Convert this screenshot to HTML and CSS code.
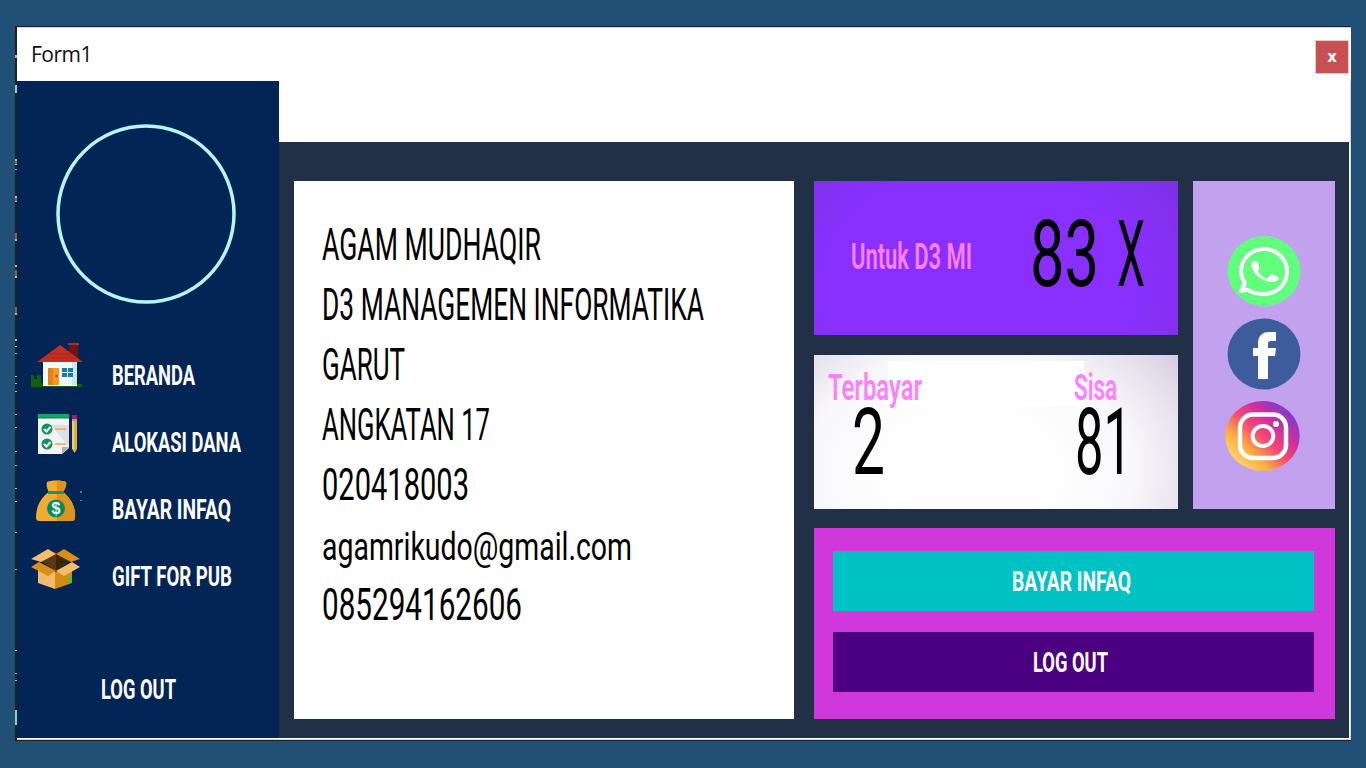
FILE: index.html
```html
<!DOCTYPE html>
<html lang="id">
<head>
<meta charset="utf-8">
<title>Form1</title>
<link rel="stylesheet" href="styles.css">
</head>
<body>
<div class="window">
  <svg class="edge" width="2" height="712" viewBox="0 0 2 712">
    <path d="M1 28v3M1 132v2M1 137v1M1 142v1M1 169v2M1 174v1M1 212v2M1 238v2M1 249v2M1 286v2M1 312v2M1 319v1M1 326v1M1 349v1M1 356v1M1 364v1M1 387v1M1 400v1M1 424v1M1 438v1M1 461v1M1 474v1M1 505v1M1 542v1M1 623v1M1 646v1M1 653v1" stroke="#b9b5ab" stroke-width="2"/>
    <path d="M1 58v8M1 683v15" stroke="#8fd3b6" stroke-width="2"/>
    <path d="M1 134v3M1 171v3M1 206v6M1 243v6M1 280v6" stroke="#9a5b30" stroke-width="2"/>
  </svg>
  <header class="titlebar">
    <span class="title">Form1</span>
    <button class="close">x</button>
  </header>
  <div class="main">
    <aside class="sidebar">
      <svg class="avatar" width="180" height="180"><circle cx="90" cy="90" r="88" fill="none" stroke="#b5f6fa" stroke-width="3.500"/></svg>
      <nav class="menu">
        <a class="item">
          <svg class="icon house" width="54" height="50" viewBox="0 0 54 50">
            <path d="M0 36h3v4h3v-4h4v8h4v3H0z" fill="#125f12"/>
            <path d="M0 45h51v3H0z" fill="#125f12"/>
            <path d="M12 22 30 7l16 14v26H12z" fill="#f1fafc"/>
            <path d="M41 22h5v24h-5z" fill="#c9e9f0"/>
            <path d="M38 5h9v17l-9-8z" fill="#701316"/>
            <path d="M37 4h11v2H37z" fill="#b52a21"/>
            <path d="M29 6 6 23h46z" fill="#c42d22"/>
            <path d="M18 15h22M12 19h34" stroke="#a92820"/>
            <path d="M17 29h11v17H17z" fill="#f59a20"/>
            <path d="M17 29h5v17h-5z" fill="#e57f18"/>
            <circle cx="25.500" cy="37" r="1.200" fill="#b83718"/>
            <path d="M31 29h11v9H31z" fill="#167eae"/>
            <path d="M36.500 29v9M31 33.500h11" stroke="#d9f4fc" stroke-width="1"/>
          </svg>
          <svg class="label" width="149" height="40"><text x="0" y="28.500" textLength="83" lengthAdjust="spacingAndGlyphs">BERANDA</text></svg>
        </a>
        <a class="item">
          <svg class="icon" width="54" height="50" viewBox="0 0 54 50">
            <path d="M7 7h31v34l-7 6H7z" fill="#f2f3f5"/>
            <path d="M20 18h18v22z" fill="#dedfe4"/>
            <path d="M7 7h31v4H7z" fill="#16a36b"/>
            <path d="M7 10.500h31v1H7z" fill="#0c7e52"/>
            <path d="M31 47v-7h7z" fill="#aeb1b7"/>
            <circle cx="16" cy="22" r="5.500" fill="#14925e"/>
            <circle cx="16" cy="37" r="5.500" fill="#14925e"/>
            <path d="m13 22 2.500 2.500 4-4.500M13 37l2.500 2.500 4-4.500" fill="none" stroke="#fff" stroke-width="2"/>
            <path d="M24 22h11M24 37h11" stroke="#eeb47c" stroke-width="2"/>
            <path d="M41 12h5v30l-2.500 4-2.500-4z" fill="#e5ad48"/>
            <path d="M41 12h2v30h-2z" fill="#f4cc70"/>
            <path d="M41 8h5v4h-5z" fill="#c20d68"/>
            <path d="M41 12h5v2h-5z" fill="#a89aa5"/>
          </svg>
          <svg class="label" width="149" height="40"><text x="0" y="28.500" textLength="129" lengthAdjust="spacingAndGlyphs">ALOKASI DANA</text></svg>
        </a>
        <a class="item">
          <svg class="icon bag" width="54" height="50" viewBox="0 0 54 50">
            <path d="M16 5c4-2 14-2 19 0 1 3-1 8-3 10 7 5 13 15 12 25 0 3-1 4-4 4H9c-3 0-4-1-4-4 0-10 5-20 13-25-2-3-3-7-2-10z" fill="#f1ad31"/>
            <path d="M26 3.500c4 0 7 .500 9 1.500 1 3-1 8-3 10 7 5 13 15 12 25 0 3-1 4-4 4H26z" fill="#dc941f"/>
            <path d="M17 14h16v3H17z" fill="#0d9a68"/>
            <circle cx="25" cy="31.500" r="9" fill="#088a61"/>
            <text class="coin" x="25" y="37" text-anchor="middle">$</text>
            <path d="M50 14v2M50 23v1" stroke="#7e775f" stroke-width="2"/>
          </svg>
          <svg class="label" width="149" height="40"><text x="0" y="28.500" textLength="119" lengthAdjust="spacingAndGlyphs">BAYAR INFAQ</text></svg>
        </a>
        <a class="item">
          <svg class="icon box" width="54" height="50" viewBox="0 0 54 50">
            <path d="M7 23v15l17 6V27z" fill="#f0bb6c"/>
            <path d="M41 23v15l-17 6V27z" fill="#d38b13"/>
            <path d="M8 14 25 6l16 8-16 13z" fill="#5b3713"/>
            <path d="M25 6v21l16-13z" fill="#3d250c"/>
            <path d="M17 4 25 9 10 17 0 14z" fill="#f3bd70"/>
            <path d="M33 4 25 9l15 8 9-3z" fill="#d88e17"/>
            <path d="M8 17 0 22l17 9 8-5z" fill="#d88e17"/>
            <path d="M41 17 49 22l-16 9-8-5z" fill="#f3bd70"/>
            <path d="m37 32 4-2v7l-4 2z" fill="#62b83d"/>
          </svg>
          <svg class="label" width="149" height="40"><text x="0" y="28.500" textLength="120" lengthAdjust="spacingAndGlyphs">GIFT FOR PUB</text></svg>
        </a>
      </nav>
      <a class="logout"><svg class="label" width="150" height="40"><text x="0" y="28.500" textLength="75" lengthAdjust="spacingAndGlyphs">LOG OUT</text></svg></a>
    </aside>
    <div class="content">
      <div class="banner"></div>
      <div class="board">
        <section class="profile">
          <svg class="line" width="460" height="60"><text x="0" y="44.500" textLength="219" lengthAdjust="spacingAndGlyphs">AGAM MUDHAQIR</text></svg>
          <svg class="line" width="460" height="60"><text x="0" y="44.500" textLength="382" lengthAdjust="spacingAndGlyphs">D3 MANAGEMEN INFORMATIKA</text></svg>
          <svg class="line" width="460" height="60"><text x="0" y="44.500" textLength="83" lengthAdjust="spacingAndGlyphs">GARUT</text></svg>
          <svg class="line" width="460" height="60"><text x="0" y="44.500" textLength="168" lengthAdjust="spacingAndGlyphs">ANGKATAN 17</text></svg>
          <svg class="line" width="460" height="60"><text x="0" y="44.500" textLength="147" lengthAdjust="spacingAndGlyphs">020418003</text></svg>
          <svg class="line email" width="460" height="60"><text x="0" y="44.500" textLength="310" lengthAdjust="spacingAndGlyphs">agamrikudo@gmail.com</text></svg>
          <svg class="line" width="460" height="60"><text x="0" y="44.500" textLength="200" lengthAdjust="spacingAndGlyphs">085294162606</text></svg>
        </section>
        <div class="side">
          <div class="upper">
            <div class="stats">
              <section class="quota">
                <svg width="364" height="153">
                  <text class="caption" x="37" y="87.500" textLength="121" lengthAdjust="spacingAndGlyphs">Untuk D3 MI</text>
                  <text class="number" x="216" y="105" textLength="69" lengthAdjust="spacingAndGlyphs">83</text>
                  <text class="number" x="303" y="105" textLength="28" lengthAdjust="spacingAndGlyphs">X</text>
                </svg>
              </section>
              <section class="progress">
                <svg width="364" height="154">
                  <rect x="74" y="6" width="196" height="45" fill="#fff"/>
                  <text class="caption" x="14" y="44.500" textLength="94" lengthAdjust="spacingAndGlyphs">Terbayar</text>
                  <text class="caption" x="260" y="44.500" textLength="43" lengthAdjust="spacingAndGlyphs">Sisa</text>
                  <text class="number" x="38" y="118.500" textLength="33" lengthAdjust="spacingAndGlyphs">2</text>
                  <text class="number" x="261" y="118.500" textLength="57" lengthAdjust="spacingAndGlyphs">81</text>
                </svg>
              </section>
            </div>
            <section class="social">
              <svg width="74" height="70" viewBox="0 0 74 70">
                <ellipse cx="37" cy="35" rx="36.500" ry="35" fill="#62ff7e"/>
                <path d="m14 57 6-1.500c5 3.200 11 4.500 17 4.500 13 0 23-10 23-22.500S50 15 37 15 14 25 14 37.500c0 4 1.500 8 4 11.500z" transform="translate(0 -2)" fill="none" stroke="#fff" stroke-width="4" stroke-linejoin="round"/>
                <path d="M28 25c3 0 5 5 4 8l-1 2c2 4 5 6 9 8l4-5c3 0 7 3 8 4-1 3-4 4-8 4-10-1-19-9-20-18 0-1 2-3 4-3z" fill="#fff"/>
              </svg>
              <svg width="74" height="72" viewBox="0 0 74 72">
                <ellipse cx="37" cy="36" rx="36.500" ry="35.500" fill="#3d5c9b"/>
                <path d="M31 61V38h-5v-8h5v-4c0-9 5-12 11-12h7v9h-5c-2 0-3 1-3 3v4h8l-1 8h-7v23z" fill="#fff"/>
              </svg>
              <svg class="insta" width="75" height="70" viewBox="0 0 75 70">
                <defs>
                  <linearGradient id="insta" x1="0.150" y1="0.850" x2="0.850" y2="0.150">
                    <stop offset="0" stop-color="#ffd166"/><stop offset="0.220" stop-color="#ffaf40"/><stop offset="0.480" stop-color="#f84a70"/><stop offset="0.720" stop-color="#d22f9a"/><stop offset="1" stop-color="#8438cf"/>
                  </linearGradient>
                </defs>
                <ellipse cx="37.500" cy="35" rx="37.250" ry="35" fill="url(#insta)"/>
                <rect x="15" y="13.500" width="46" height="43.500" rx="13" fill="none" stroke="#fff" stroke-width="4.500"/>
                <ellipse cx="38" cy="35" rx="10.300" ry="10" fill="none" stroke="#fff" stroke-width="4"/>
                <circle cx="51" cy="23" r="3" fill="#fff"/>
              </svg>
            </section>
          </div>
          <section class="actions">
            <button class="pay"><svg class="label" width="119" height="60"><text x="0" y="40" textLength="119" lengthAdjust="spacingAndGlyphs">BAYAR INFAQ</text></svg></button>
            <button class="exit"><svg class="label" width="75" height="60"><text x="0" y="40" textLength="75" lengthAdjust="spacingAndGlyphs">LOG OUT</text></svg></button>
          </section>
        </div>
      </div>
    </div>
  </div>
</div>
</body>
</html>
```
FILE: styles.css
```css
* { box-sizing: border-box; }
body {
  margin: 0;
  width: 1366px;
  height: 768px;
  padding: 26px 15px 26px;
  background: #215077;
  overflow: hidden;
  font-family: Roboto, "Liberation Sans", sans-serif;
}
svg { display: block; flex: none; overflow: visible; }
button { border: 0; padding: 0; margin: 0; font: inherit; }

.window {
  position: relative;
  width: 1336px;
  height: 715px;
  border: solid #1b2227;
  border-width: 1px 0 1px 2px;
  background: #fff;
  box-shadow: inset -1px -1px #d0d4d6;
}
.edge { position: absolute; left: -2px; top: 0; }

.titlebar {
  height: 54px;
  display: flex;
  align-items: flex-start;
  justify-content: space-between;
  padding: 13px 2px 0 14px;
  border-top: 1px solid #d5d5d5;
  background: #fff;
}
.title {
  font: 21px/26px "Open Sans", "Noto Sans", sans-serif;
  color: #101018;
  letter-spacing: -0.500px;
}
.close {
  width: 34px;
  height: 34px;
  margin-top: -1px;
  background: #c85052;
  color: #fff;
  font: bold 15px/31px "DejaVu Sans", sans-serif;
  outline: 1px solid #edc6c7;
  outline-offset: -1px;
}

.main {
  display: flex;
  height: 657px;
  width: 1332px;
}
.sidebar {
  width: 261.5px;
  background: #022555;
  flex: none;
  padding-top: 42.500px;
}
.avatar { margin-left: 39px; }
.menu { padding: 36.500px 0 0 14px; }
.item {
  height: 67px;
  display: flex;
  align-items: flex-start;
  gap: 27px;
}
.house { margin-top: -1px; }
.bag { margin-top: 2.500px; }
.box { margin-top: 3.500px; }
.item .label { margin-top: 15.500px; }
.label text {
  font-family: Roboto, "Liberation Sans", sans-serif;
  font-size: 27px;
  font-weight: 700;
  fill: #fff;
}
.coin {
  font: bold 16px "Liberation Sans", sans-serif;
  fill: #fff;
}
.logout { display: block; padding: 62px 0 0 84px; }

.content { flex: 1; display: flex; flex-direction: column; }
.banner { height: 61px; background: #fff; }
.board {
  flex: 1;
  display: flex;
  gap: 20px;
  padding: 38.500px 14px 19.500px 15.500px;
  background: #213047;
}
.profile {
  width: 499.500px;
  padding: 34px 0 0 27.500px;
  background: #fff;
}
.line text {
  font-size: 45px;
  fill: #000;
}
.line.email text { font-size: 39px; }
.side { display: flex; flex-direction: column; gap: 19.500px; width: 521.500px; }
.upper { display: flex; justify-content: space-between; height: 328px; }
.stats { display: flex; flex-direction: column; gap: 20px; width: 364.500px; }
.quota {
  height: 154px;
  background: radial-gradient(ellipse 250px 190px at 45% 70%, #8930ff 60%, #8330ee 85%, #7032d2 125%);
}
.progress {
  height: 154px;
  background: radial-gradient(ellipse 220px 160px at 43% 75%, #fff 35%, #f8f7fa 75%, #e6e1ec 100%, #cfc4df 125%);
}
.caption {
  font-size: 37px;
  font-weight: 600;
  fill: #ff80ff;
}
.number {
  font-size: 92px;
  fill: #000;
}
.social {
  width: 142px;
  padding-top: 55.500px;
  display: flex;
  flex-direction: column;
  align-items: center;
  gap: 11.500px;
  background: #c2a1ee;
}
.insta { margin-left: -3px; }
.actions {
  flex: 1;
  display: flex;
  flex-direction: column;
  gap: 21px;
  padding: 23px 21px 0 19.500px;
  background: #d038dc;
}
.actions button {
  height: 60px;
  display: flex;
  justify-content: center;
}
.actions .label { margin-right: 4px; }
.pay { background: #00c2c4; }
.exit { background: #4b0081; }
.exit .label { margin-right: 7px; }
```
